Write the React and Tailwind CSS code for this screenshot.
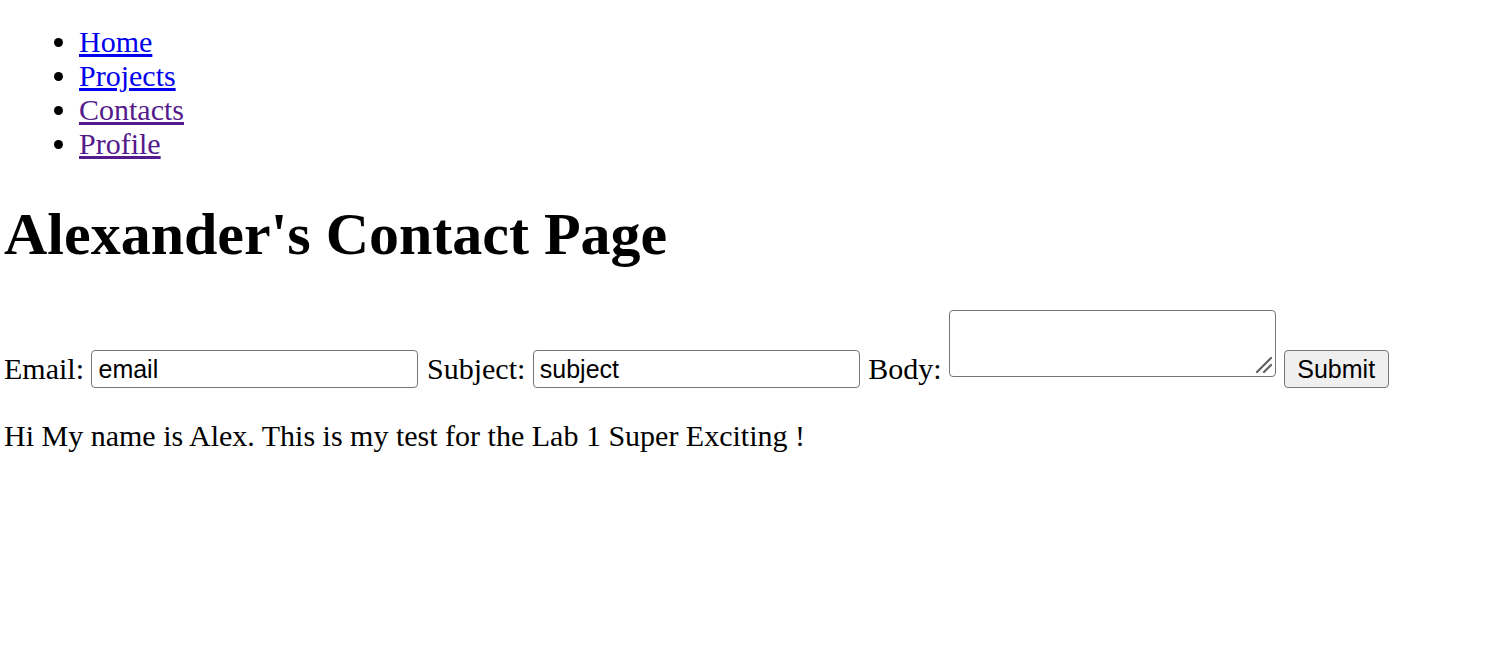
export default function App() {
  return (
    <div className="pl-[4px] font-['Liberation_Serif','Times_New_Roman',serif] text-[30px] leading-[34px] text-black bg-white min-h-[662px]">
      <ul className="list-disc pl-[75px] mt-[25px] mb-0">
        <li><a href="#" className="text-[#0000ee] underline">Home</a></li>
        <li><a href="#" className="text-[#0000ee] underline">Projects</a></li>
        <li><a href="#" className="text-[#551a8b] underline">Contacts</a></li>
        <li><a href="#" className="text-[#551a8b] underline">Profile</a></li>
      </ul>
      <h1 className="mt-[39px] text-[60px] leading-[68px] font-bold">Alexander's Contact Page</h1>
      <form className="mt-[42px] flex items-start gap-[7.5px]" onSubmit={(e) => e.preventDefault()}>
        <span className="mt-[42px]">Email:</span>
        <input
          type="text"
          defaultValue="email"
          className="mt-[40px] w-[327px] h-[38px] border border-[#767676] rounded-[4px] bg-white pl-[6px] pr-[4px] font-['Liberation_Sans',Arial,sans-serif] text-[25px] text-black"
        />
        <span className="mt-[42px] ml-[1px]">Subject:</span>
        <input
          type="text"
          defaultValue="subject"
          className="mt-[40px] w-[327px] h-[38px] border border-[#767676] rounded-[4px] bg-white pl-[6px] pr-[4px] font-['Liberation_Sans',Arial,sans-serif] text-[25px] text-black"
        />
        <span className="mt-[42px] ml-[1px]">Body:</span>
        <div className="relative w-[327px] h-[67px] mt-[0px]">
          <textarea className="block w-[327px] h-[67px] border border-[#767676] rounded-[4px] bg-white resize-none p-[4px] font-['Liberation_Mono',monospace] text-[25px]" />
          <svg className="absolute right-[3px] bottom-[3px]" width="18" height="18" viewBox="0 0 18 18">
            <line x1="2" y1="16" x2="16" y2="2" stroke="#5f5f5f" strokeWidth="2.2" strokeLinecap="round" />
            <line x1="9" y1="16" x2="16" y2="9" stroke="#5f5f5f" strokeWidth="2.2" strokeLinecap="round" />
          </svg>
        </div>
        <button
          type="submit"
          className="mt-[40px] w-[105px] h-[38px] border border-[#767676] rounded-[4px] bg-[#efefef] font-['Liberation_Sans',Arial,sans-serif] text-[25px] leading-[29px] text-black"
        >
          Submit
        </button>
      </form>
      <p className="mt-[31px]">Hi My name is Alex. This is my test for the Lab 1 Super Exciting !</p>
    </div>
  );
}
